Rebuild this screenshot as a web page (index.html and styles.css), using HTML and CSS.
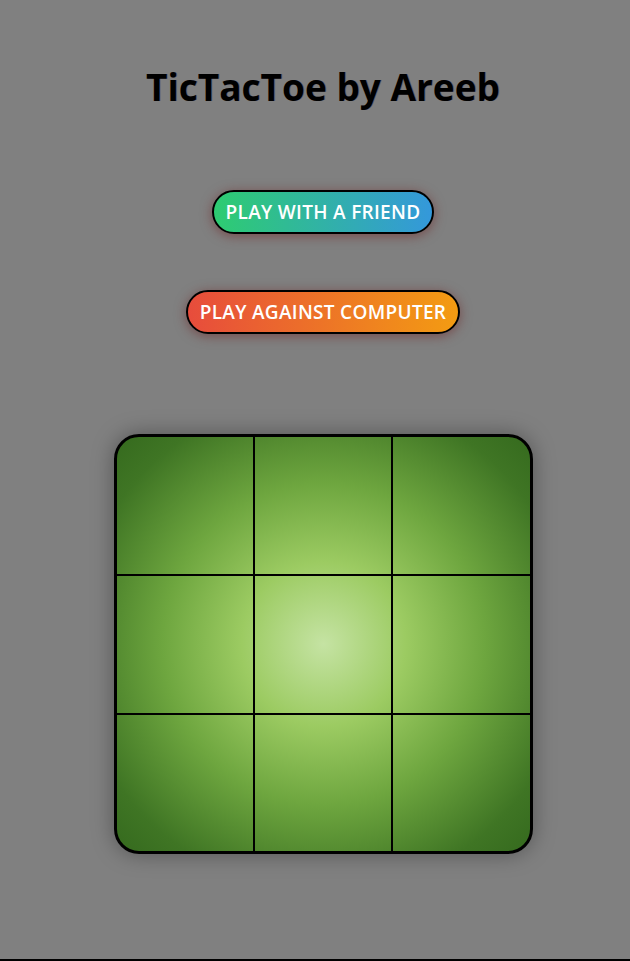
FILE: index.html
```html
<!DOCTYPE html>
<html lang="en">
<head>
<meta charset="utf-8">
<title>TicTacToe by Areeb</title>
<link rel="stylesheet" href="styles.css">
</head>
<body>
<main class="page">
  <h1 class="title">TicTacToe by Areeb</h1>
  <div class="menu">
    <button class="btn btn-friend">PLAY WITH A FRIEND</button>
    <button class="btn btn-computer">PLAY AGAINST COMPUTER</button>
  </div>
  <div class="board">
    <div class="cell"></div><div class="cell"></div><div class="cell"></div>
    <div class="cell"></div><div class="cell"></div><div class="cell"></div>
    <div class="cell"></div><div class="cell"></div><div class="cell"></div>
  </div>
</main>
</body>
</html>
```

FILE: styles.css
```css
html, body {
  margin: 0;
  padding: 0;
  background: #808080;
}
body {
  font-family: "Open Sans", "Noto Sans", sans-serif;
}
.page {
  box-sizing: border-box;
  height: 961px;
  border-bottom: 2px solid #000;
  display: flex;
  flex-direction: column;
  align-items: center;
  padding-top: 61px;
  padding-left: 16px;
}
.title {
  margin: 0;
  font-size: 37px;
  font-weight: 700;
  line-height: 52px;
  color: #000;
  letter-spacing: 0;
  text-shadow: 1px 0 0 rgba(40, 0, 60, 0.25);
}
.menu {
  display: flex;
  flex-direction: column;
  align-items: center;
  gap: 56px;
  margin-top: 77px;
}
.btn {
  font-family: "Open Sans", "Noto Sans", sans-serif;
  font-size: 19px;
  font-weight: 600;
  color: #fff;
  height: 44px;
  padding: 0 12px;
  border: 2px solid #000;
  border-radius: 22px;
  box-shadow: 0 2px 12px rgba(110, 30, 30, 0.55);
  letter-spacing: 0.3px;
}
.btn-friend {
  background: linear-gradient(90deg, #2ecc71, #3498db);
}
.btn-computer {
  background: linear-gradient(90deg, #e74c3c, #f39c12);
}
.board {
  margin-top: 100px;
  box-sizing: border-box;
  width: 419px;
  height: 420px;
  border: 3px solid #000;
  border-radius: 25px;
  overflow: hidden;
  display: grid;
  grid-template-columns: 138px 138px 137px;
  grid-template-rows: 139px 139px 136px;
  background: radial-gradient(circle at 50% 50%, #c5e3a3 0%, #9ccb62 28%, #6ea63f 55%, #3f7524 85%, #356a1e 100%);
  box-shadow: 0 0 22px rgba(0, 0, 0, 0.35);
}
.cell {
  box-sizing: border-box;
  min-width: 0;
}
.cell:nth-child(3n+1),
.cell:nth-child(3n+2) {
  border-right: 2px solid #000;
}
.cell:nth-child(-n+6) {
  border-bottom: 2px solid #000;
}
```
